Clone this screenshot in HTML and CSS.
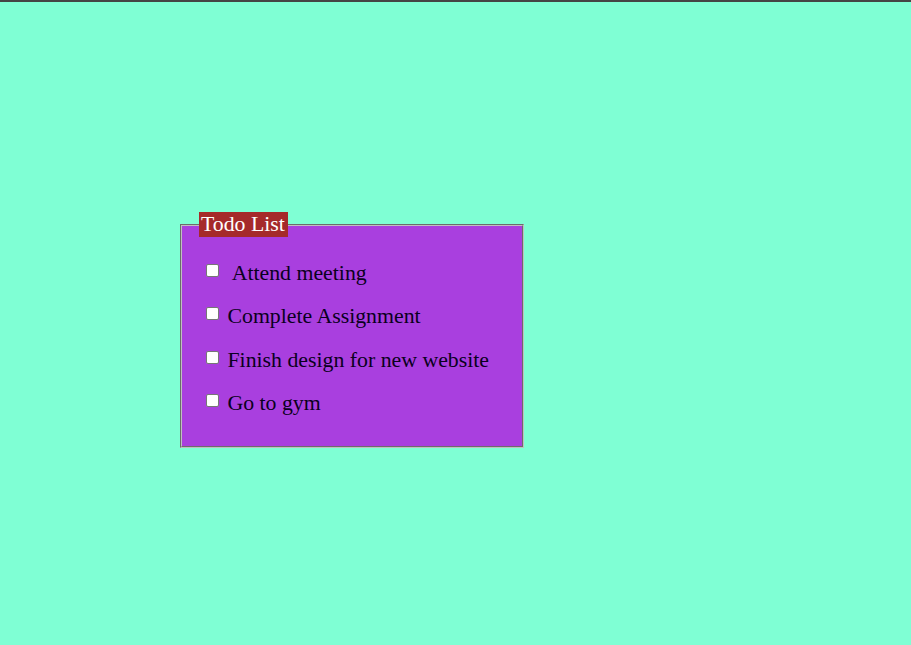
FILE: index.html
```html
<!DOCTYPE html>
<html>
<head>
<meta charset="utf-8">
<title>Todo List</title>
<link rel="stylesheet" href="styles.css">
</head>
<body>
<div class="topbar"></div>
<main class="page">
  <fieldset class="todo">
    <legend class="todo-title">Todo List</legend>
    <div class="items">
      <label class="item"><input class="check" type="checkbox">&nbsp; Attend meeting</label>
      <label class="item"><input class="check" type="checkbox"> Complete Assignment</label>
      <label class="item"><input class="check" type="checkbox"> Finish design for new website</label>
      <label class="item"><input class="check" type="checkbox"> Go to gym</label>
    </div>
  </fieldset>
</main>
</body>
</html>
```
FILE: styles.css
```css
html, body {
  margin: 0;
  padding: 0;
}
body {
  background: #7fffd4;
  font-family: "Liberation Serif", "Times New Roman", serif;
  min-height: 645px;
}
.topbar {
  height: 2px;
  background: #454545;
}
.page {
  padding: 210px 0 0 180px;
}
.todo {
  box-sizing: border-box;
  width: 344px;
  margin: 0;
  padding: 24px 20px 30px 17px;
  border: 2px groove #c0c0c0;
  background: #a93fdf;
  font-size: 21.8px;
}
.todo-title {
  background: #a52a2a;
  color: #fff;
  padding: 0 3px 0 2px;
  line-height: 25px;
  margin-left: 0;
}
.items {
  display: flex;
  flex-direction: column;
  gap: 18.33px;
  padding-left: 3px;
}
.item {
  display: block;
  height: 25px;
  line-height: 25px;
  color: #0a0020;
}
.check {
  -webkit-appearance: none;
  appearance: none;
  box-sizing: border-box;
  width: 13px;
  height: 13px;
  margin: 3px 3px 3px 4px;
  border: 1px solid #767676;
  border-radius: 2px;
  background: #fff;
  vertical-align: baseline;
}
```
